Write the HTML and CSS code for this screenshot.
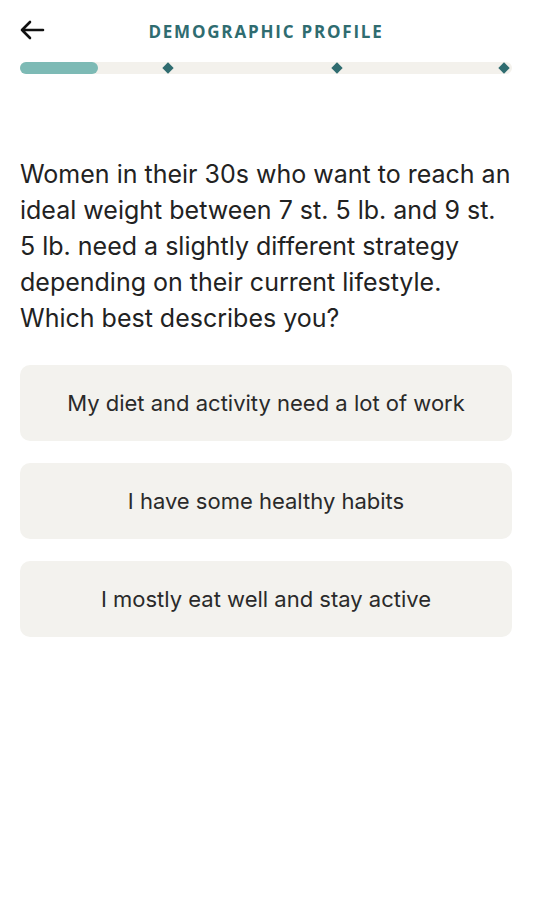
FILE: index.html
```html
<!DOCTYPE html>
<html lang="en">
<head>
    <meta charset="UTF-8">
    <meta name="viewport" content="width=533px">
    <title>Demographic Profile</title>
    <link rel="stylesheet" href="styles.css">
</head>
<body>
    <div class="screen">
        <div class="header">
            <button class="back" aria-label="Back">
                <svg width="26" height="20" viewBox="0 0 26 20">
                    <path d="M24 10H3M11 2L3 10l8 8" fill="none" stroke="#111" stroke-width="2.6" stroke-linecap="round" stroke-linejoin="round"/>
                </svg>
            </button>
            <h1>DEMOGRAPHIC PROFILE</h1>
        </div>

        <div class="progress">
            <div class="fill"></div>
            <span class="dot dot-1"></span>
            <span class="dot dot-2"></span>
            <span class="dot dot-3"></span>
        </div>

        <p class="question">Women in their 30s who want to reach an ideal weight between 7 st. 5 lb. and 9 st. 5 lb. need a slightly different strategy depending on their current lifestyle. Which best describes you?</p>

        <div class="options">
            <button class="option">My diet and activity need a lot of work</button>
            <button class="option">I have some healthy habits</button>
            <button class="option">I mostly eat well and stay active</button>
        </div>
    </div>
</body>
</html>
```

FILE: styles.css
```css
body {
    margin: 0;
    background: #ffffff;
    font-family: Inter, "Noto Sans", sans-serif;
    color: #222222;
}

.screen {
    padding: 0 21px 0 20px;
}

/* Header */
.header {
    position: relative;
    height: 62px;
    display: flex;
    align-items: center;
    justify-content: center;
}

.back {
    position: absolute;
    left: -1px;
    top: 20px;
    background: none;
    border: none;
    padding: 0;
    cursor: pointer;
}

.header h1 {
    margin: 0;
    font-size: 17px;
    font-weight: 700;
    letter-spacing: 1.8px;
    color: #2f6c70;
    font-family: "Open Sans", sans-serif;
}

/* Progress */
.progress {
    position: relative;
    height: 12px;
    background: #f3f1ec;
    border-radius: 6px;
}

.fill {
    width: 78px;
    height: 100%;
    background: #7dbab5;
    border-radius: 6px;
}

.dot {
    position: absolute;
    top: 2px;
    width: 8px;
    height: 8px;
    background: #2f6c70;
    transform: rotate(45deg);
}

.dot-1 { left: 144px; }
.dot-2 { left: 313px; }
.dot-3 { left: 480px; }

/* Question */
.question {
    margin: 82px 0 29px;
    font-size: 25px;
    line-height: 36px;
    color: #222222;
}

.options {
    display: flex;
    flex-direction: column;
    gap: 22px;
}

.option {
    height: 76px;
    background: #f3f2ee;
    border: none;
    border-radius: 10px;
    font-family: inherit;
    font-size: 22px;
    color: #2a2a2a;
    cursor: pointer;
}
```
